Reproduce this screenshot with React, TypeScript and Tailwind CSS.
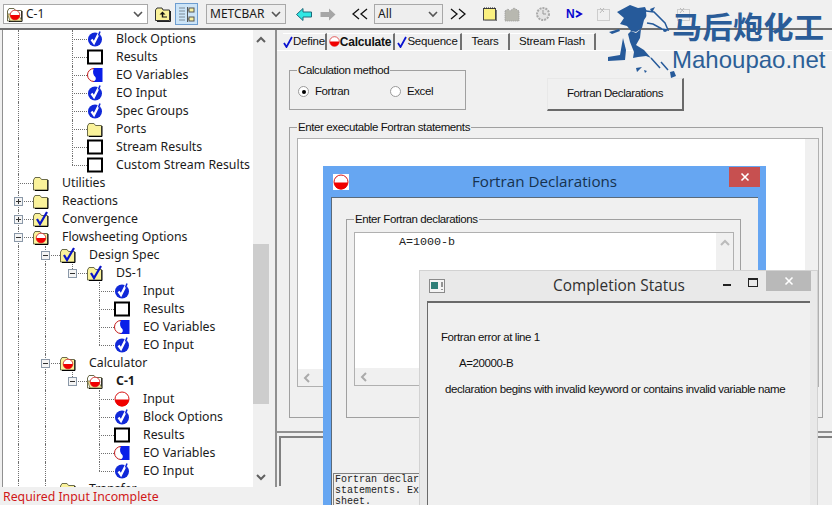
import React from 'react';

const ui = { fontFamily: '"Liberation Sans", Arial, sans-serif' };
const treeFont = { fontFamily: '"Noto Sans", "Open Sans", sans-serif' };
const titleFont = { fontFamily: '"Open Sans", "Noto Sans", sans-serif' };
const mono = { fontFamily: '"Liberation Mono", "DejaVu Sans Mono", monospace' };

const CheckDone = ({ size = 16 }: { size?: number }) => (
  <svg width={size} height={size} viewBox="0 0 16 16">
    <circle cx="8" cy="8.5" r="7" fill="#1028d8" />
    <path d="M4.5 8.5 L7 12 L12 2" fill="none" stroke="#fff" strokeWidth="2.3" />
    <path d="M13 0.5 L11.5 4.5" stroke="#1028d8" strokeWidth="1.5" />
  </svg>
);

const Empty = () => (
  <svg width="16" height="16" viewBox="0 0 16 16">
    <rect x="1" y="1.5" width="14" height="13" fill="#fff" stroke="#000" strokeWidth="2" />
  </svg>
);

const EoVar = () => (
  <svg width="16" height="16" viewBox="0 0 16 16">
    <circle cx="7" cy="8" r="6.5" fill="#fff" stroke="#c01818" strokeWidth="1" />
    <path d="M7 1 H15.5 V15 H6 C9 13.5 10 11 7 8.5 C5.5 6 6 3 7 1 Z" fill="#0a1ee8" />
  </svg>
);

const RedHalf = ({ size = 16 }: { size?: number }) => (
  <svg width={size} height={size} viewBox="0 0 16 16">
    <circle cx="8" cy="8" r="7" fill="#fff" stroke="#d81818" strokeWidth="1" />
    <path d="M1 8.5 H15 A7 7 0 0 1 1 8.5 Z" fill="#f00000" />
  </svg>
);

const Folder = ({ check, red, open }: { check?: boolean; red?: boolean; open?: boolean }) => (
  <svg width="16" height="16" viewBox="0 0 16 16">
    <path d="M0.5 5 L2 2.5 H7 L8.5 4.5 H14.5 V15 H0.5 Z" fill={open ? '#fff' : '#faf29a'} stroke="#6b6b4a" strokeWidth="1" />
    <path d="M15 5 V15.5 H2" fill="none" stroke="#000" strokeWidth="1" />
    {open && <path d="M0.5 8 H11 L15 15 H3 Z" fill="#f6e79a" stroke="#6b6b4a" strokeWidth="0.8" />}
    {check && <path d="M4 8 L7 13 L14 1" fill="none" stroke="#0a14c8" strokeWidth="2.2" />}
    {red && (
      <g>
        <circle cx="8" cy="9" r="4.8" fill="#fff" stroke="#d01818" strokeWidth="0.8" />
        <path d="M3.2 9 H12.8 A4.8 4.8 0 0 1 3.2 9 Z" fill="#f00000" />
      </g>
    )}
  </svg>
);

type Row = {
  label: string;
  level: number;
  guides: boolean[];
  icon: React.ReactNode;
  expander?: '+' | '-';
  last?: boolean;
  bold?: boolean;
};

const done = <CheckDone />;
const empty = <Empty />;
const eo = <EoVar />;

const rows: Row[] = [
  { label: 'Block Options', level: 2, guides: [true, false], icon: done },
  { label: 'Results', level: 2, guides: [true, false], icon: empty },
  { label: 'EO Variables', level: 2, guides: [true, false], icon: eo },
  { label: 'EO Input', level: 2, guides: [true, false], icon: done },
  { label: 'Spec Groups', level: 2, guides: [true, false], icon: done },
  { label: 'Ports', level: 2, guides: [true, false], icon: <Folder /> },
  { label: 'Stream Results', level: 2, guides: [true, false], icon: empty },
  { label: 'Custom Stream Results', level: 2, guides: [true, false], icon: empty, last: true },
  { label: 'Utilities', level: 0, guides: [], icon: <Folder /> },
  { label: 'Reactions', level: 0, guides: [], icon: <Folder />, expander: '+' },
  { label: 'Convergence', level: 0, guides: [], icon: <Folder check />, expander: '+' },
  { label: 'Flowsheeting Options', level: 0, guides: [], icon: <Folder red />, expander: '-' },
  { label: 'Design Spec', level: 1, guides: [true], icon: <Folder check />, expander: '-' },
  { label: 'DS-1', level: 2, guides: [true, true], icon: <Folder check />, expander: '-', last: true },
  { label: 'Input', level: 3, guides: [true, true, false], icon: done },
  { label: 'Results', level: 3, guides: [true, true, false], icon: empty },
  { label: 'EO Variables', level: 3, guides: [true, true, false], icon: eo },
  { label: 'EO Input', level: 3, guides: [true, true, false], icon: done, last: true },
  { label: 'Calculator', level: 1, guides: [true], icon: <Folder red />, expander: '-' },
  { label: 'C-1', level: 2, guides: [true, true], icon: <Folder red open />, expander: '-', bold: true, last: true },
  { label: 'Input', level: 3, guides: [true, true, false], icon: <RedHalf /> },
  { label: 'Block Options', level: 3, guides: [true, true, false], icon: done },
  { label: 'Results', level: 3, guides: [true, true, false], icon: empty },
  { label: 'EO Variables', level: 3, guides: [true, true, false], icon: eo },
  { label: 'EO Input', level: 3, guides: [true, true, false], icon: done, last: true },
  { label: 'Transfer', level: 1, guides: [true], icon: <Folder /> },
];

const TreeRow = ({ row }: { row: Row }) => (
  <div className="ml-[-3px] flex h-[18px] shrink-0 items-stretch">
    {row.guides.map((on, i) => (
      <div key={i} className="w-[27px] shrink-0">
        {on && <div className="ml-[18px] h-full border-l border-dotted border-[#707070]" />}
      </div>
    ))}
    {/* connector cell: elbow line and the +/- box */}
    <div className="relative w-[33px] shrink-0">
      <div className={`ml-[18px] border-l border-dotted border-[#707070] ${row.last ? 'h-[9px]' : 'h-full'}`} />
      <div className="absolute left-[18px] top-[9px] w-[15px] border-t border-dotted border-[#707070]" />
      {row.expander && (
        <div className="absolute left-[14px] top-[5px] flex h-[9px] w-[9px] items-center justify-center border border-[#8a98a8] bg-[#f4f4f4]">
          <div className="h-px w-[5px] bg-[#303030]" />
          {row.expander === '+' && <div className="absolute h-[5px] w-px bg-[#303030]" />}
        </div>
      )}
    </div>
    <div className="flex w-[16px] shrink-0 items-center">{row.icon}</div>
    <span
      className={`ml-[13px] whitespace-nowrap text-[12.3px] leading-[18px] text-[#1a1a1a] ${row.bold ? 'font-bold' : ''}`}
      style={treeFont}
    >
      {row.label}
    </span>
  </div>
);

const Combo = ({ label, className, icon }: { label: string; className: string; icon?: React.ReactNode }) => (
  <div className={`flex h-[20px] shrink-0 items-center border border-[#a8a8a8] ${className}`}>
    {icon}
    <span className="ml-[3px] flex-1 text-[12px] text-[#1a1a1a]" style={treeFont}>{label}</span>
    <svg width="16" height="16" viewBox="0 0 16 16" className="mr-[1px]">
      <path d="M4 6 L8 10 L12 6" fill="none" stroke="#555" strokeWidth="1.6" />
    </svg>
  </div>
);

const Chevrons = ({ dir }: { dir: 'l' | 'r' }) => (
  <svg width="16" height="12" viewBox="0 0 16 12">
    <path
      d={dir === 'l' ? 'M7 1 L1 6 L7 11 M15 1 L9 6 L15 11' : 'M1 1 L7 6 L1 11 M9 1 L15 6 L9 11'}
      fill="none"
      stroke="#111"
      strokeWidth="1.3"
    />
  </svg>
);

const DimIcon = ({ className }: { className: string }) => (
  <svg width="14" height="14" viewBox="0 0 14 14" className={className}>
    <rect x="0.5" y="2.5" width="12" height="11" fill="none" stroke="#aaa" strokeDasharray="1 1" />
    <path d="M3 1 L7 5 M7 1 L3 6" stroke="#bbb" />
  </svg>
);

const Toolbar = () => (
  <div className="flex h-[28px] shrink-0 items-center pl-[3px]" style={ui}>
    <Combo label="C-1" className="w-[145px] bg-white" icon={<span className="ml-[3px] flex"><Folder red open /></span>} />
    <svg width="16" height="15" viewBox="0 0 16 15" className="ml-[7px]">
      <path d="M0.5 3 L2 1 H7 L8 3 H14.5 V13.5 H0.5 Z" fill="#faf29a" stroke="#333" />
      <path d="M15.5 4 V14.5 H2" fill="none" stroke="#222" />
      <path d="M7.5 4.5 L4.5 7.5 H6.8 V10.5 H12 V9.5 H8.2 V7.5 H10.5 Z" fill="#111" />
    </svg>
    <div className="ml-[4px] flex h-[22px] w-[23px] shrink-0 items-center justify-center border border-[#6d9dd0] bg-[#cce4f7]">
      <svg width="17" height="17" viewBox="0 0 17 17">
        <path d="M1 2 H7 M1 5 H7 M1 8 H7 M1 11 H7 M1 14 H7" stroke="#7d8a96" />
        <path d="M9.5 1 V16 M9.5 4 H11 M9.5 13 H11" stroke="#555" fill="none" />
        <rect x="11" y="2" width="5" height="4" fill="#f8f0a0" stroke="#555" />
        <rect x="11" y="11" width="5" height="4" fill="#f8f0a0" stroke="#555" />
      </svg>
    </div>
    <Combo label="METCBAR" className="ml-[8px] w-[80px] bg-[#eeeeee]" />
    <svg width="16" height="13" viewBox="0 0 16 13" className="ml-[10px]">
      <path d="M7 0.5 L0.5 6.5 L7 12.5 V9 H15.5 V4 H7 Z" fill="#30e8e4" stroke="#1f6a7a" />
    </svg>
    <svg width="16" height="13" viewBox="0 0 16 13" className="ml-[8px]">
      <path d="M9 0.5 L15.5 6.5 L9 12.5 V9 H0.5 V4 H9 Z" fill="#a6a6a6" />
    </svg>
    <span className="ml-[16px] flex"><Chevrons dir="l" /></span>
    <Combo label="All" className="ml-[6px] w-[69px] bg-[#eeeeee]" />
    <span className="ml-[7px] flex"><Chevrons dir="r" /></span>
    <svg width="14" height="14" viewBox="0 0 14 14" className="ml-[17px]">
      <rect x="0.5" y="1.5" width="12" height="11.5" fill="#faf080" stroke="#444" />
      <path d="M1 1 H13" stroke="#222" strokeDasharray="1 1" />
      <path d="M13.5 3 V14 H2" fill="none" stroke="#777" />
    </svg>
    <svg width="16" height="15" viewBox="0 0 16 15" className="ml-[7px]">
      <path d="M1 4 L4 2 L6 4 L10 1 L15 4 V14 H1 Z" fill="#b8b8b0" stroke="#9a9a9a" strokeDasharray="1 1" />
    </svg>
    <svg width="16" height="16" viewBox="0 0 16 16" className="ml-[15px]">
      <circle cx="8" cy="8" r="6" fill="#e4e4e4" stroke="#aaa" strokeWidth="2" strokeDasharray="2 1" />
      <path d="M8 4 V8 H11" fill="none" stroke="#999" />
    </svg>
    <span className="ml-[15px] flex items-center text-[12px] font-bold leading-none text-[#0808d0]" style={ui}>
      N
      <svg width="8" height="8" viewBox="0 0 8 8">
        <path d="M1 1 L6 4 L1 7" fill="none" stroke="#0808d0" strokeWidth="2" />
      </svg>
    </span>
    <DimIcon className="ml-[14px]" />
    <DimIcon className="ml-[66px]" />
  </div>
);

const Legend = ({ children, bg = 'bg-[#f0f0f0]' }: { children: React.ReactNode; bg?: string }) => (
  <span className={`absolute left-[7px] top-[-8px] whitespace-nowrap px-px text-[11.5px] leading-[15px] tracking-[-0.4px] text-[#111] ${bg}`}>
    {children}
  </span>
);

const Radio = ({ on, label, className }: { on?: boolean; label: string; className: string }) => (
  <div className={`flex items-center ${className}`}>
    <div className="flex h-[11px] w-[11px] items-center justify-center rounded-full border border-[#9a9a9a] bg-white">
      {on && <div className="h-[4px] w-[4px] rounded-full bg-black" />}
    </div>
    <span className="ml-[6px] text-[11.5px] tracking-[-0.4px] text-[#111]">{label}</span>
  </div>
);

const tabs = [
  { label: 'Define', w: 'w-[44px]', mark: 'check' },
  { label: 'Calculate', w: 'w-[68px]', mark: 'red', active: true },
  { label: 'Sequence', w: 'w-[67px]', mark: 'check' },
  { label: 'Tears', w: 'w-[48px]' },
  { label: 'Stream Flash', w: 'w-[86px]' },
];

const Tabs = () => (
  <div className="flex h-[18px] shrink-0 items-stretch border-b border-white pl-[6px]">
    {tabs.map((t) => (
      <div
        key={t.label}
        className={`flex shrink-0 items-center justify-center border-r-2 border-t border-r-[#707070] border-t-white pb-px ${t.w} ${t.active ? 'text-[12px] font-bold' : 'text-[11.5px]'} tracking-[-0.2px] text-[#111]`}
      >
        {t.mark === 'check' && (
          <svg width="10" height="12" viewBox="0 0 10 12">
            <path d="M1 7 L3.5 11 L9 1" fill="none" stroke="#0a14d0" strokeWidth="1.8" />
          </svg>
        )}
        {t.mark === 'red' && (
          <svg width="11" height="11" viewBox="0 0 16 16">
            <circle cx="8" cy="8" r="7" fill="#fff" stroke="#d81818" />
            <path d="M1 8 H15 A7 7 0 0 1 1 8 Z" fill="#f00000" />
          </svg>
        )}
        <span>{t.label}</span>
      </div>
    ))}
  </div>
);

const RightPane = () => (
  <div className="ml-[6px] flex min-w-0 flex-1 flex-col border-l-2 border-[#909090] pt-[3px]" style={ui}>
    <Tabs />
    <div className="flex pl-[12px] pt-[19px]">
      <div className="relative h-[40px] w-[177px] shrink-0 border border-[#a0a0a0]">
        <Legend>Calculation method</Legend>
        <div className="flex pl-[8px] pt-[12px]">
          <Radio on label="Fortran" className="w-[92px]" />
          <Radio label="Excel" className="w-[70px]" />
        </div>
      </div>
      <button className="ml-[81px] mt-[8px] h-[33px] w-[137px] shrink-0 border border-b-2 border-r-2 border-[#e8e8e8] border-b-[#6a6a6a] border-r-[#6a6a6a] bg-[#f0f0f0] text-[11.5px] tracking-[-0.4px] text-[#111]">
        Fortran Declarations
      </button>
    </div>
    <div className="relative ml-[12px] mr-[9px] mt-[16px] h-[291px] border border-[#a0a0a0] pl-[7px] pr-[3px] pt-[10px]">
      <Legend>Enter executable Fortran statements</Legend>
      <div className="flex h-[249px] border border-[#b0b0b0] bg-white">
        <div className="flex min-w-0 flex-1 flex-col">
          <div className="flex-1" />
          <div className="flex h-[17px] items-center bg-[#f0f0f0] pl-[4px]">
            <svg width="10" height="10" viewBox="0 0 10 10">
              <path d="M7 1 L3 5 L7 9" fill="none" stroke="#aaa" strokeWidth="2" />
            </svg>
          </div>
        </div>
        <div className="w-[13px] shrink-0 bg-[#f0f0f0]" />
      </div>
    </div>
    <div className="mt-[13px] flex-1 border-t-2 border-[#909090] pl-[2px] pt-[3px]">
      <div className="h-[50px] border-l-2 border-t-2 border-[#808080]" />
    </div>
  </div>
);

const Scrollbar = () => (
  <div className="flex w-[16px] shrink-0 flex-col items-center bg-[#f0f0f0]">
    <svg width="10" height="8" viewBox="0 0 10 8" className="mt-[6px]">
      <path d="M1 6 L5 2 L9 6" fill="none" stroke="#606060" strokeWidth="2" />
    </svg>
    <div className="mt-[200px] h-[160px] w-full bg-[#cdcdcd]" />
    <svg width="10" height="8" viewBox="0 0 10 8" className="mt-[69px]">
      <path d="M1 2 L5 6 L9 2" fill="none" stroke="#606060" strokeWidth="2" />
    </svg>
  </div>
);

const FortranWindow = () => (
  <div className="absolute left-[323px] top-[166px] flex h-[339px] w-[443px] flex-col bg-[#66a6f2] px-[8px] pb-0" style={ui}>
    <div className="flex h-[31px] shrink-0 items-center pr-[18px]">
      <div className="ml-[2px] flex h-[16px] w-[16px] items-center justify-center bg-white">
        <RedHalf />
      </div>
      <span className="flex-1 text-center text-[15.2px] text-[#16324f]" style={titleFont}>Fortran Declarations</span>
    </div>
    <div className="absolute right-[6px] top-[1px] flex h-[20px] w-[31px] items-center justify-center bg-[#c75050]">
      <svg width="10" height="10" viewBox="0 0 10 10">
        <path d="M1.5 1.5 L8.5 8.5 M8.5 1.5 L1.5 8.5" stroke="#fff" strokeWidth="1.6" />
      </svg>
    </div>
    <div className="flex flex-1 flex-col border-l border-t border-[#5a6a7a] bg-[#f0f0f0]">
      <div className="relative ml-[14px] mr-[17px] mt-[21px] h-[199px] shrink-0 border border-[#a0a0a0] pl-[7px] pr-[6px] pt-[12px]">
        <Legend>Enter Fortran declarations</Legend>
        <div className="flex h-[154px] border border-[#b0b0b0] bg-white">
          <div className="flex min-w-0 flex-1 flex-col">
            <pre className="flex-1 pl-[44px] pt-[2px] text-[11.7px] leading-[14px] text-[#222]" style={mono}>A=1000-b</pre>
            <div className="flex h-[17px] items-center bg-[#f0f0f0] pl-[4px]">
              <svg width="10" height="10" viewBox="0 0 10 10">
                <path d="M7 1 L3 5 L7 9" fill="none" stroke="#aaa" strokeWidth="2" />
              </svg>
            </div>
          </div>
          <div className="flex w-[17px] justify-center bg-[#f0f0f0] pt-[5px]">
            <svg width="10" height="10" viewBox="0 0 10 10">
              <path d="M1 7 L5 3 L9 7" fill="none" stroke="#bbb" strokeWidth="2" />
            </svg>
          </div>
        </div>
      </div>
      <div className="ml-[1px] mt-[55px] flex-1 border-l border-t border-[#808080] pl-px text-[10px] leading-[11px] text-[#222]" style={mono}>
        <div>Fortran declarations</div>
        <div>statements. Excel</div>
        <div>sheet.</div>
      </div>
    </div>
  </div>
);

const CompletionWindow = () => (
  <div className="absolute left-[419px] top-[270px] flex h-[235px] w-[399px] flex-col border-l border-r border-t border-[#d2d2d2] bg-[#e9e9e9] px-[7px]" style={ui}>
    <div className="flex h-[30px] shrink-0 items-center pb-px">
      <svg width="16" height="14" viewBox="0 0 16 14" className="ml-[2px]">
        <rect x="0.5" y="0.5" width="15" height="13" fill="#f4f4f4" stroke="#8a8a8a" />
        <rect x="2" y="3" width="7" height="7" fill="#2f7f78" />
        <path d="M13 3 V8 M13 10 V11" stroke="#333" />
      </svg>
      <span className="ml-[108px] text-[15.4px] text-[#303030]" style={titleFont}>Completion Status</span>
    </div>
    <div className="absolute left-[303px] top-[13px] h-[2px] w-[8px] bg-[#222]" />
    <div className="absolute left-[328px] top-[7px] h-[9px] w-[10px] border border-t-2 border-[#222]" />
    <div className="absolute right-[6px] top-0 flex h-[20px] w-[45px] items-center justify-center bg-[#b9b9b9]">
      <svg width="10" height="10" viewBox="0 0 10 10">
        <path d="M1.5 1.5 L8.5 8.5 M8.5 1.5 L1.5 8.5" stroke="#fff" strokeWidth="1.6" />
      </svg>
    </div>
    <div className="flex flex-1 flex-col border-l border-t-2 border-[#6a6a6a] bg-[#f0f0f0] pt-[27px] text-[11.5px] leading-[14px] tracking-[-0.4px] text-[#111]">
      <div className="pl-[13px]">Fortran error at line 1</div>
      <div className="mt-[12px] pl-[31px]">A=20000-B</div>
      <div className="mt-[12px] pl-[17px]">declaration begins with invalid keyword or contains invalid variable name</div>
    </div>
  </div>
);

// horse watermark, drawn over the toolbar together with the site name
const Watermark = () => (
  <div className="absolute left-[600px] top-0 flex">
    <svg width="80" height="80" viewBox="0 0 80 80" className="shrink-0">
      <g fill="#265a9a">
        <path d="M17 12 L30 5 L38 8 L45 7 L48 14 L44 20 L42 28 L36 32 L31 31 L27 26 L20 24 L24 18 Z" />
        <path d="M31 31 L36 33 L41 29 L40 38 L36 45 L44 50 L51 58 L46 56 L38 57 L33 58 L34 52 L30 42 L28 34 Z" />
        <path d="M8 57 L20 55 L23 38 L26 50 L25 60 L8 61 Z" />
        <path d="M9 32 L19 29 L20 31 L12 34 Z" />
        <path d="M50 9 L55 7 L52 13 Z" />
        <path d="M36 68 L42 67 L37 72 Z M44 70 L47 71 L45 73 Z" />
        <path d="M70 72 L74 71 L76 76 L71 78 Z" />
        <circle cx="65" cy="30" r="2" />
      </g>
      <path d="M46 11 L54 12 L65 23 L68 30 L62 29 L53 24 L47 23" fill="#f2f2f2" stroke="#265a9a" strokeWidth="1.5" />
      <path d="M51 58 L60 68 M61 62 L68 70" stroke="#265a9a" strokeWidth="1.5" />
    </svg>
    <div className="ml-[-8px] flex flex-col">
      <span className="whitespace-nowrap pt-[7px] text-[30px] font-bold leading-[36px] tracking-[0.5px] text-[#2a5c98]" style={{ fontFamily: '"Noto Sans CJK SC", sans-serif' }}>
        马后炮化工
      </span>
      <span className="mt-[2px] whitespace-nowrap text-[24px] leading-[30px] text-[#2c5f97]" style={ui}>Mahoupao.net</span>
    </div>
  </div>
);

export default function App() {
  return (
    <div className="relative flex h-[505px] w-[832px] flex-col overflow-hidden bg-[#f0f0f0]">
      <Toolbar />
      <div className="h-[2px] shrink-0 bg-[#707070]" />
      <div className="flex min-h-0 flex-1">
        <div className="ml-[2px] flex w-[267px] shrink-0 overflow-hidden border-l border-[#909090] bg-white">
          <div className="flex min-w-0 flex-1 flex-col overflow-hidden">
            {rows.map((r, i) => <TreeRow key={i} row={r} />)}
          </div>
          <Scrollbar />
        </div>
        <RightPane />
      </div>
      <div className="flex h-[18px] shrink-0 items-center pl-[3px] pt-[2px] text-[12.3px] text-[#d01818]" style={treeFont}>
        Required Input Incomplete
      </div>
      <FortranWindow />
      <CompletionWindow />
      <Watermark />
    </div>
  );
}
